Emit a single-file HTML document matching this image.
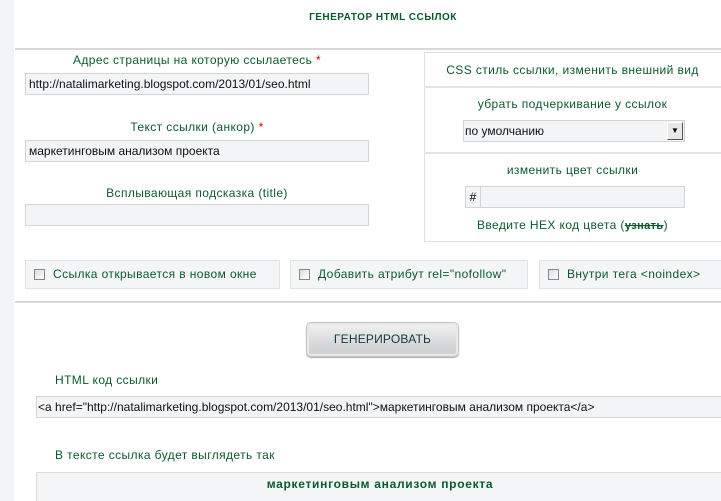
<!DOCTYPE html>
<html><head><meta charset="utf-8"><style>
*{margin:0;padding:0;box-sizing:border-box}
html,body{width:721px;height:501px;overflow:hidden}
body{background:#fff;font-family:"Liberation Sans",sans-serif;font-size:12px;color:#0b5a2e;position:relative}
.strip{position:absolute;left:0;top:0;width:14px;height:501px;background:#f3f4f5}
.a{position:absolute}
.lbl{position:absolute;text-align:center;letter-spacing:.4px;white-space:nowrap}
.inp{position:absolute;background:#f2f4f5;border:1px solid #d4d4d4;color:#111;padding-left:3px;line-height:20px;white-space:nowrap;overflow:hidden;font-size:12px}
.hr{position:absolute;left:15px;right:0;height:2px;background:#d8d8d8}
.star{color:#d00}
.cb{position:absolute;top:260px;height:29px;background:#f3f5f6;border:1px solid #e0e2e3;line-height:27px;padding-left:8px;letter-spacing:.4px;white-space:nowrap;overflow:hidden}
.cb i{display:inline-block;width:11px;height:11px;border:1px solid #888;background:linear-gradient(135deg,#ddd,#fff);vertical-align:-2px;margin-right:8px}
</style></head><body>
<div class="strip"></div>
<div class="lbl" style="left:0;width:766px;top:12px;font-weight:bold;font-size:10px;letter-spacing:.5px">ГЕНЕРАТОР HTML ССЫЛОК</div>
<div class="hr" style="top:48px"></div>

<div class="lbl" style="left:25px;width:344px;top:53px">Адрес страницы на которую ссылаетесь <span class="star">*</span></div>
<div class="inp" style="left:25px;top:73px;width:344px;height:22px">http://natalimarketing.blogspot.com/2013/01/seo.html</div>
<div class="lbl" style="left:25px;width:344px;top:120px">Текст ссылки (анкор) <span class="star">*</span></div>
<div class="inp" style="left:25px;top:140px;width:344px;height:22px">маркетинговым анализом проекта</div>
<div class="lbl" style="left:25px;width:344px;top:186px">Всплывающая подсказка (title)</div>
<div class="inp" style="left:25px;top:204px;width:344px;height:22px"></div>

<div class="a" style="left:424px;top:52px;width:300px;height:190px;border:1px solid #e0e0e0"></div>
<div class="a" style="left:424px;top:86px;width:300px;height:2px;background:#e4e4e4"></div>
<div class="a" style="left:424px;top:152px;width:300px;height:2px;background:#e4e4e4"></div>
<div class="lbl" style="left:424px;width:297px;top:63px">CSS стиль ссылки, изменить внешний вид</div>
<div class="lbl" style="left:424px;width:297px;top:97px">убрать подчеркивание у ссылок</div>
<div class="inp" style="left:463px;top:120px;width:222px;height:22px;padding-left:1px">по умолчанию
<div class="a" style="right:1px;top:1px;width:16px;height:18px;background:#e8e8e8;border-right:1px solid #555;border-bottom:1px solid #555;border-top:1px solid #fff;border-left:1px solid #fff;font-size:8px;line-height:16px;text-align:center;color:#000">▼</div></div>
<div class="lbl" style="left:424px;width:297px;top:163px">изменить цвет ссылки</div>
<div class="inp" style="left:465px;top:186px;width:220px;height:22px;padding-left:0"><span style="display:inline-block;width:15px;height:20px;border-right:1px solid #d4d4d4;text-align:center;color:#000">#</span></div>
<div class="lbl" style="left:424px;width:297px;top:218px">Введите HEX код цвета (<b style="text-decoration:line-through;font-size:11px">узнать</b>)</div>

<div class="cb" style="left:25px;width:255px"><i></i>Ссылка открывается в новом окне</div>
<div class="cb" style="left:290px;width:238px"><i></i>Добавить атрибут rel="nofollow"</div>
<div class="cb" style="left:539px;width:190px"><i></i>Внутри тега &lt;noindex&gt;</div>
<div class="hr" style="top:301px"></div>

<div class="a" style="left:306px;top:322px;width:153px;height:35px;border:1px solid #c4c4c4;border-radius:5px;background:linear-gradient(#f3f3f3,#d8d9da 60%,#cfd0d1);box-shadow:inset 0 0 0 2px #e9e9e9,0 1px 1px #aaa;text-align:center;line-height:33px;color:#0e3a40;letter-spacing:.2px">ГЕНЕРИРОВАТЬ</div>

<div class="lbl" style="left:55px;top:373px">HTML код ссылки</div>
<div class="inp" style="left:36px;top:396px;width:700px;height:22px;padding-left:1px">&lt;a href="http://natalimarketing.blogspot.com/2013/01/seo.html"&gt;маркетинговым анализом проекта&lt;/a&gt;</div>
<div class="lbl" style="left:55px;top:448px">В тексте ссылка будет выглядеть так</div>
<div class="a" style="left:36px;top:472px;width:700px;height:40px;background:#f3f5f6;border:1px solid #ddd"></div>
<div class="lbl" style="left:36px;width:688px;top:477px;font-weight:bold;font-size:12px;letter-spacing:.7px">маркетинговым анализом проекта</div>
</body></html>
